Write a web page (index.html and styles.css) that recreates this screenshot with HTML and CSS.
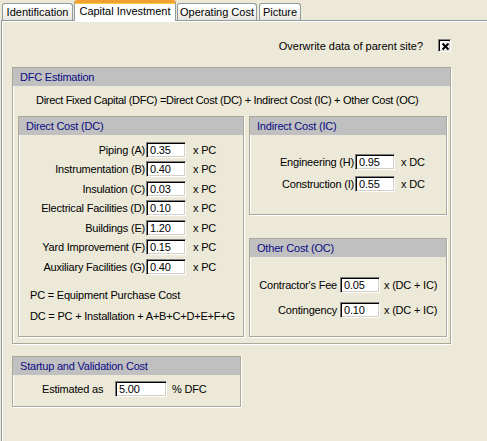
FILE: index.html
```html
<!DOCTYPE html>
<html>
<head>
<meta charset="utf-8">
<title>Capital Investment</title>
<link rel="stylesheet" href="styles.css">
</head>
<body>
<div class="tabs">
  <div class="tab t-ident">Identification</div>
  <div class="tab t-cap active">Capital Investment</div>
  <div class="tab t-op">Operating Cost</div>
  <div class="tab t-pic">Picture</div>
</div>
<div class="page">
  <div class="overwrite">
    <span>Overwrite data of parent site?</span>
    <span class="check"><svg width="9" height="9" viewBox="0 0 9 9"><path d="M1.5 1.5 L7.5 7.5 M7.5 1.5 L1.5 7.5" stroke="#000" stroke-width="2" fill="none"/></svg></span>
  </div>

  <div class="group dfc">
    <div class="ghead">DFC Estimation</div>
    <div class="formula">Direct Fixed Capital (DFC) =Direct Cost (DC) + Indirect Cost (IC) + Other Cost (OC)</div>
    <div class="cols">
      <div class="group direct">
        <div class="ghead">Direct Cost (DC)</div>
        <div class="rows">
          <div class="row"><span class="lbl">Piping (A)</span><span class="input">0.35</span><span class="unit">x PC</span></div>
          <div class="row"><span class="lbl">Instrumentation (B)</span><span class="input">0.40</span><span class="unit">x PC</span></div>
          <div class="row"><span class="lbl">Insulation (C)</span><span class="input">0.03</span><span class="unit">x PC</span></div>
          <div class="row"><span class="lbl">Electrical Facilities (D)</span><span class="input">0.10</span><span class="unit">x PC</span></div>
          <div class="row"><span class="lbl">Buildings (E)</span><span class="input">1.20</span><span class="unit">x PC</span></div>
          <div class="row"><span class="lbl">Yard Improvement (F)</span><span class="input">0.15</span><span class="unit">x PC</span></div>
          <div class="row"><span class="lbl">Auxiliary Facilities (G)</span><span class="input">0.40</span><span class="unit">x PC</span></div>
        </div>
        <div class="notes">
          <p>PC = Equipment Purchase Cost</p>
          <p>DC = PC + Installation + A+B+C+D+E+F+G</p>
        </div>
      </div>
      <div class="rightcol">
        <div class="group indirect">
          <div class="ghead">Indirect Cost (IC)</div>
          <div class="rows">
            <div class="row"><span class="lbl">Engineering (H)</span><span class="input">0.95</span><span class="unit">x DC</span></div>
            <div class="row"><span class="lbl">Construction (I)</span><span class="input">0.55</span><span class="unit">x DC</span></div>
          </div>
        </div>
        <div class="group other">
          <div class="ghead">Other Cost (OC)</div>
          <div class="rows">
            <div class="row"><span class="lbl">Contractor's Fee</span><span class="input">0.05</span><span class="unit">x (DC + IC)</span></div>
            <div class="row"><span class="lbl">Contingency</span><span class="input">0.10</span><span class="unit">x (DC + IC)</span></div>
          </div>
        </div>
      </div>
    </div>
  </div>

  <div class="group startup">
    <div class="ghead">Startup and Validation Cost</div>
    <div class="row">
      <span class="lbl">Estimated as</span><span class="input">5.00</span><span class="unit">% DFC</span>
    </div>
  </div>
</div>
</body>
</html>
```

FILE: styles.css
```css
* { box-sizing: border-box; }

html, body {
  margin: 0;
  padding: 0;
  height: 441px;
  overflow: hidden;
}

body {
  background: #ECE9D8;
  font-family: "Liberation Sans", Arial, sans-serif;
  font-size: 11px;
  color: #000;
}

/* ---------- tabs ---------- */
.tabs {
  display: flex;
  align-items: flex-end;
  height: 21px;
  margin-bottom: -1px;
  padding-left: 2px;
  position: relative;
  z-index: 1;
}

.tab {
  height: 17px;
  margin-bottom: 1px;
  margin-right: 1px;
  border: 1px solid #919B9C;
  border-bottom: none;
  border-radius: 3px 3px 0 0;
  background: linear-gradient(#FFFFFF, #F3F3EF 60%, #E6E5DD);
  text-align: center;
  line-height: 17px;
  white-space: nowrap;
}

.t-ident { width: 71px; }
.t-cap { width: 102px; }
.t-op { width: 80px; }
.t-pic { width: 42px; margin-left: 1px; }

.tab.active {
  height: 21px;
  margin-bottom: 0;
  background: #FFFFFF;
  border-top: 3px solid #F0A030;
  box-shadow: inset 0 1px 0 #FFC83C;
  line-height: 16px;
  border-radius: 3px 3px 0 0;
}

/* ---------- page ---------- */
.page {
  height: 421px;
  margin-left: 1px;
  border-top: 1px solid #919B9C;
  border-left: 1px solid #919B9C;
  box-shadow: inset 1px 1px 0 #FFFFFF;
  overflow: hidden;
}

.overwrite {
  display: flex;
  justify-content: flex-end;
  align-items: center;
  gap: 15px;
  width: 449px;
  height: 13px;
  margin-top: 18px;
}

.check {
  display: flex;
  align-items: center;
  justify-content: center;
  width: 13px;
  height: 13px;
  background: #FFFFFF;
  border: 1px solid;
  border-color: #808080 #FFFFFF #FFFFFF #808080;
  box-shadow: inset 1px 1px 0 #000000, inset -1px -1px 0 #D4D0C8;
}

.check svg { display: block; margin: 1px 0 0 1px; }

/* ---------- group boxes ---------- */
.group {
  border: 1px solid #ACA899;
  box-shadow: inset 1px 1px 0 #FFFFFF, 1px 1px 0 #FFFFFF;
  letter-spacing: -0.2px;
}

.ghead {
  height: 18px;
  line-height: 18px;
  background: #C0C0C0;
  color: #0A0A84;
  padding-left: 7px;
  white-space: nowrap;
}

.dfc {
  width: 439px;
  height: 277px;
  margin: 15px 0 0 10px;
}

.formula {
  height: 28px;
  line-height: 28px;
  padding-left: 23px;
  white-space: nowrap;
  letter-spacing: -0.3px;
}

.cols {
  display: flex;
  gap: 5px;
  margin-top: 2px;
  padding-left: 5px;
}

.direct {
  width: 226px;
  height: 221px;
}

.rightcol {
  width: 198px;
  display: flex;
  flex-direction: column;
  gap: 23px;
}

.indirect, .other {
  height: 99px;
}

/* ---------- rows ---------- */
.row {
  display: flex;
  align-items: center;
  white-space: nowrap;
}

.lbl { text-align: right; }

.input {
  height: 16px;
  width: 40px;
  padding-left: 3px;
  line-height: 14px;
  background: #FFFFFF;
  border: 1px solid;
  border-color: #808080 #FFFFFF #FFFFFF #808080;
  box-shadow: inset 1px 1px 0 #000000, inset -1px -1px 0 #D4D0C8;
}

.direct .rows { margin-top: 5px; }
.direct .row { height: 19.5px; }
.direct .lbl { width: 126px; margin-right: 1px; }
.direct .unit { margin-left: 7px; }

.notes { margin-top: 8px; padding-left: 11px; }
.notes p { margin: 0; height: 21px; line-height: 21px; }

.indirect .rows { margin-top: 16px; }
.indirect .row { height: 22px; }
.indirect .lbl { width: 104px; margin-right: 1px; }
.indirect .unit { margin-left: 6px; }

.other .rows { margin-top: 15px; }
.other .row { height: 25px; }
.other .lbl { width: 87px; margin-right: 3px; }
.other .unit { margin-left: 4px; }

/* ---------- startup ---------- */
.startup {
  width: 229px;
  height: 51px;
  margin: 12px 0 0 10px;
}

.startup .row {
  height: 28px;
  padding-left: 29px;
}

.startup .lbl { width: 73px; text-align: left; }
.startup .input { width: 52px; }
.startup .unit { margin-left: 5px; }
```
